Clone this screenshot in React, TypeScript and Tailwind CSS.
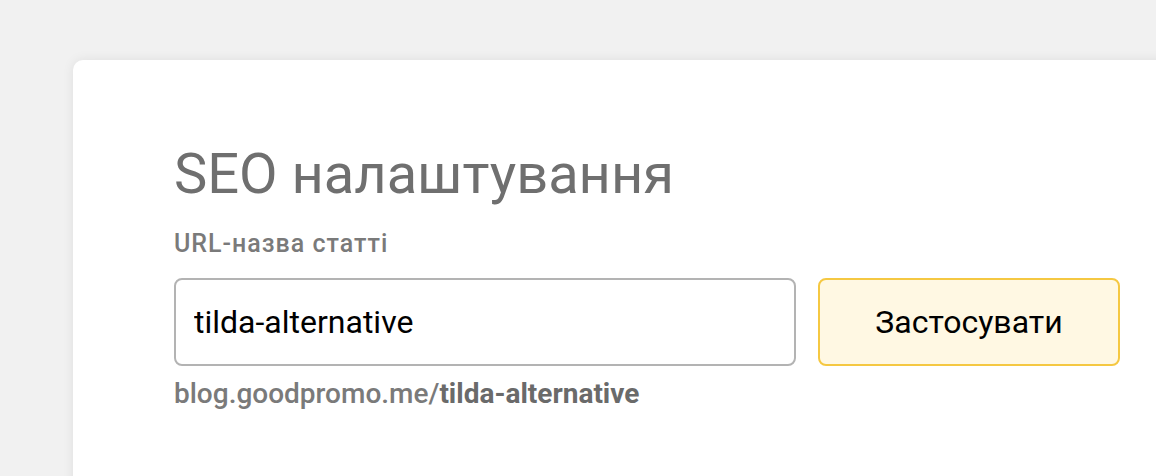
import React, { useState } from "react";

const App = () => {
  const [slug, setSlug] = useState("tilda-alternative");

  return (
    <div className="w-[1156px] h-[476px] overflow-hidden bg-[#f1f1f1] pt-[60px] pl-[73px] font-['Roboto',sans-serif]">
      <div className="w-[1200px] h-[500px] bg-white rounded-[10px] shadow-[0_0_12px_rgba(0,0,0,0.08)] pl-[101px] pt-[82px]">
        <h1 className="text-[56px] leading-[64px] text-[#6f6f6f] font-normal">SEO налаштування</h1>
        <label htmlFor="slug" className="block mt-[24px] text-[25px] leading-[28px] tracking-[1px] font-medium text-[#7a7a7a]">
          URL-назва статті
        </label>
        <div className="flex gap-[22px] mt-[20px]">
          <input
            id="slug"
            value={slug}
            onChange={(e) => setSlug(e.target.value)}
            className="w-[622px] h-[88px] rounded-[8px] border-2 border-[#b3b3b3] px-[18px] text-[32px] text-black outline-none"
          />
          <button className="w-[302px] h-[88px] rounded-[8px] border-2 border-[#f5c842] bg-[#fff8e3] text-[32px] text-black">
            Застосувати
          </button>
        </div>
        <div className="mt-[12px] text-[28px] leading-[32px] font-medium text-[#7a7a7a]">
          blog.goodpromo.me/<span className="font-bold text-[#6a6a6a]">{slug}</span>
        </div>
      </div>
    </div>
  );
};

export default App;
